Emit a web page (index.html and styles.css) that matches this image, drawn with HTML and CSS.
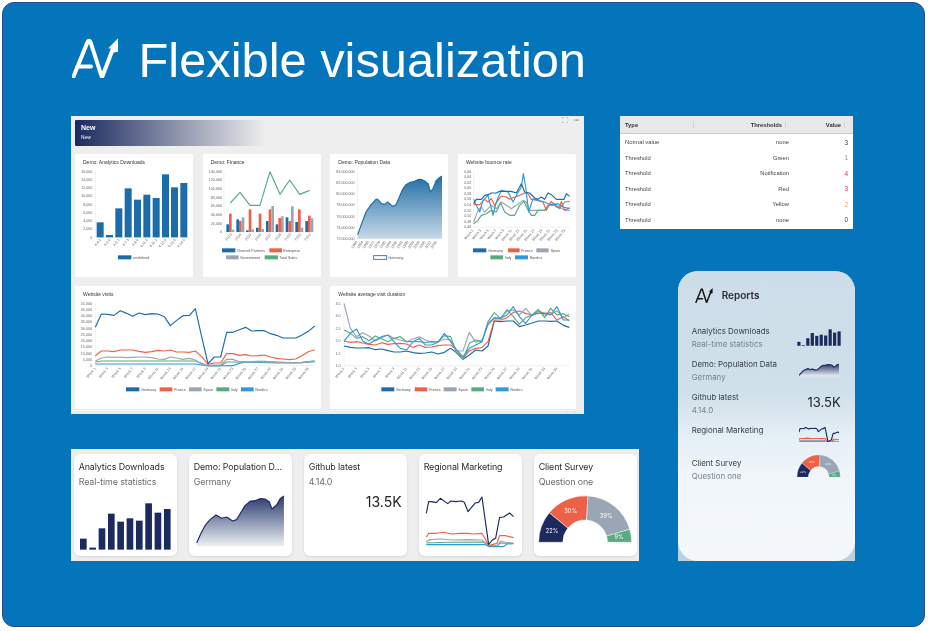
FILE: index.html
```html
<!DOCTYPE html>
<html lang="en">
<head>
<meta charset="utf-8">
<title>Flexible visualization</title>
<link rel="stylesheet" href="styles.css">
</head>
<body>
<svg class="defs" width="0" height="0" aria-hidden="true">
  <defs>
    <symbol id="logo" viewBox="0 0 46 40">
      <path class="logo-line" d="M1.500 38.500L15.500 4Q17 1.500 18.500 4L29.500 38Q30 39 30.500 38L42 8"/>
      <path class="logo-line" d="M5.500 28.500H19"/>
      <path class="logo-head" d="M46 .3L36.300 10.300L41 10.800L39.500 15L46 13.700Z"/>
    </symbol>
    <linearGradient id="popfill" x1="0" y1="0" x2="0" y2="1"><stop offset="0" stop-color="#236ea6"/><stop offset="1" stop-color="#c6d9e7"/></linearGradient>
    <linearGradient id="navyfill" x1="0" y1="0" x2="0" y2="1"><stop offset="0" stop-color="#2a3a6d"/><stop offset="1" stop-color="#eef0f4"/></linearGradient>
  </defs>
</svg>
<main class="slide">
  <header class="hero">
    <svg class="hero-logo"><use href="#logo"/></svg>
    <h1 class="hero-title">Flexible visualization</h1>
  </header>
  <div class="stage">
    <div class="left-col">
      <section class="dash">
        <div class="dash-head">
          <div class="banner"><strong>New</strong><span>New</span></div>
          <div class="dash-tools">
            <svg class="tool" viewBox="0 0 6 6"><path d="M0 1.500V0H1.500M4.500 0H6V1.500M6 4.500V6H4.500M1.500 6H0V4.500"/></svg>
            <svg class="dots" viewBox="0 0 5 2"><circle cx=".7" cy="1" r=".6"/><circle cx="2.500" cy="1" r=".6"/><circle cx="4.300" cy="1" r=".6"/></svg>
          </div>
        </div>
        <div class="dash-grid">
          <article class="card">
            <h2 class="card-title">Demo: Analytics Downloads</h2>
            <svg class="plot" viewBox="15 174 354 320">
              <g class="yl">
                <text x="67" y="182">16,000</text><text x="67" y="207">14,000</text><text x="67" y="232">12,000</text><text x="67" y="256">10,000</text><text x="67" y="281">8,000</text><text x="67" y="306">6,000</text><text x="67" y="331">4,000</text><text x="67" y="355">2,000</text><text x="67" y="380">0</text>
              </g>
              <path class="axis" d="M77 178V376H355"/>
              <g class="de-f">
                <rect x="80" y="331" width="21" height="45"/><rect x="108" y="369" width="21" height="7"/><rect x="136" y="289" width="21" height="87"/><rect x="164" y="229" width="21" height="147"/><rect x="192" y="263" width="21" height="113"/><rect x="220" y="248" width="21" height="128"/><rect x="248" y="258" width="21" height="118"/><rect x="276" y="187" width="21" height="189"/><rect x="303" y="226" width="21" height="150"/><rect x="331" y="213" width="21" height="163"/>
              </g>
              <g class="xl">
                <text transform="rotate(-50 94 384)" x="94" y="384">4.4.1</text><text transform="rotate(-50 122 384)" x="122" y="384">4.5.0</text><text transform="rotate(-50 150 384)" x="150" y="384">4.5.2</text><text transform="rotate(-50 178 384)" x="178" y="384">4.7.3</text><text transform="rotate(-50 206 384)" x="206" y="384">4.8.0</text><text transform="rotate(-50 234 384)" x="234" y="384">4.11.0</text><text transform="rotate(-50 262 384)" x="262" y="384">4.11.1</text><text transform="rotate(-50 290 384)" x="290" y="384">4.12.0</text><text transform="rotate(-50 318 384)" x="318" y="384">4.13.0</text><text transform="rotate(-50 346 384)" x="346" y="384">4.14.0</text>
              </g>
              <rect class="de-f" x="144" y="430" width="40" height="12"/><text class="lg" x="190" y="440">undefined</text>
            </svg>
          </article>
          <article class="card">
            <h2 class="card-title">Demo: Finance</h2>
            <svg class="plot" viewBox="399 174 354 320">
              <g class="yl">
                <text x="456" y="182">140,000</text><text x="456" y="208">120,000</text><text x="456" y="234">100,000</text><text x="456" y="260">80,000</text><text x="456" y="286">60,000</text><text x="456" y="312">40,000</text><text x="456" y="338">20,000</text><text x="456" y="364">0</text>
              </g>
              <path class="axis" d="M462 178V360H735"/>
              <g class="de-f">
                <rect x="469" y="337" width="8" height="23"/><rect x="499" y="322" width="8" height="38"/><rect x="528" y="355" width="8" height="5"/><rect x="558" y="347" width="8" height="13"/><rect x="588" y="327" width="8" height="33"/><rect x="617" y="337" width="8" height="23"/><rect x="647" y="316" width="8" height="44"/><rect x="676" y="330" width="8" height="30"/><rect x="706" y="327" width="8" height="33"/>
              </g>
              <g class="fr-f">
                <rect x="477" y="305" width="8" height="55"/><rect x="507" y="327" width="8" height="33"/><rect x="536" y="292" width="8" height="68"/><rect x="566" y="305" width="8" height="55"/><rect x="596" y="292" width="8" height="68"/><rect x="625" y="318" width="8" height="42"/><rect x="655" y="327" width="8" height="33"/><rect x="684" y="292" width="8" height="68"/><rect x="714" y="311" width="8" height="49"/>
              </g>
              <g class="es-f">
                <rect x="485" y="353" width="8" height="7"/><rect x="515" y="316" width="8" height="44"/><rect x="544" y="352" width="8" height="8"/><rect x="574" y="351" width="8" height="9"/><rect x="604" y="282" width="8" height="78"/><rect x="633" y="313" width="8" height="47"/><rect x="663" y="283" width="8" height="77"/><rect x="692" y="347" width="8" height="13"/><rect x="722" y="319" width="8" height="41"/>
              </g>
              <polyline class="l it" points="481,273 510,241 540,280 570,280 600,179 630,247 659,204 689,247 719,235"/>
              <g class="xl">
                <text transform="rotate(-50 486 368)" x="486" y="368">2013</text><text transform="rotate(-50 515 368)" x="515" y="368">2014</text><text transform="rotate(-50 545 368)" x="545" y="368">2015</text><text transform="rotate(-50 575 368)" x="575" y="368">2016</text><text transform="rotate(-50 605 368)" x="605" y="368">2017</text><text transform="rotate(-50 635 368)" x="635" y="368">2018</text><text transform="rotate(-50 664 368)" x="664" y="368">2019</text><text transform="rotate(-50 694 368)" x="694" y="368">2020</text><text transform="rotate(-50 724 368)" x="724" y="368">2021</text>
              </g>
              <rect class="de-f" x="456" y="409" width="40" height="12"/><text class="lg" x="500" y="419">Channel Partners</text>
              <rect class="fr-f" x="598" y="409" width="38" height="12"/><text class="lg" x="640" y="419">Enterprise</text>
              <rect class="es-f" x="468" y="430" width="38" height="12"/><text class="lg" x="510" y="440">Government</text>
              <rect class="it-f" x="584" y="430" width="40" height="12"/><text class="lg" x="628" y="440">Total Sales</text>
            </svg>
          </article>
          <article class="card">
            <h2 class="card-title">Demo: Population Data</h2>
            <svg class="plot" viewBox="17 174 354 320">
              <g class="yl">
                <text x="91" y="182">84.000.000</text><text x="91" y="215">82.000.000</text><text x="91" y="249">80.000.000</text><text x="91" y="283">78.000.000</text><text x="91" y="317">76.000.000</text><text x="91" y="350">74.000.000</text><text x="91" y="383">72.000.000</text>
              </g>
              <path class="axis" d="M100 178V380H354"/>
              <path fill="url(#popfill)" d="M100 380V368L110 340L125 300L140 278L155 262L160 262L172 275L182 277L190 270L205 283L215 278L225 255L235 232L245 218L255 212L268 209L280 203L290 202L300 206L312 216L318 240L326 230L335 207L345 197L353 192V380Z"/>
              <polyline class="l de" points="100,368 110,340 125,300 140,278 155,262 160,262 172,275 182,277 190,270 205,283 215,278 225,255 235,232 245,218 255,212 268,209 280,203 290,202 300,206 312,216 318,240 326,230 335,207 345,197 353,192"/>
              <g class="xl">
                <text transform="rotate(-55 100 390)" x="100" y="390">1960</text><text transform="rotate(-55 117 390)" x="117" y="390">1964</text><text transform="rotate(-55 134 390)" x="134" y="390">1968</text><text transform="rotate(-55 151 390)" x="151" y="390">1972</text><text transform="rotate(-55 168 390)" x="168" y="390">1976</text><text transform="rotate(-55 185 390)" x="185" y="390">1980</text><text transform="rotate(-55 202 390)" x="202" y="390">1984</text><text transform="rotate(-55 219 390)" x="219" y="390">1988</text><text transform="rotate(-55 236 390)" x="236" y="390">1992</text><text transform="rotate(-55 253 390)" x="253" y="390">1996</text><text transform="rotate(-55 270 390)" x="270" y="390">2000</text><text transform="rotate(-55 287 390)" x="287" y="390">2004</text><text transform="rotate(-55 304 390)" x="304" y="390">2008</text><text transform="rotate(-55 321 390)" x="321" y="390">2012</text><text transform="rotate(-55 338 390)" x="338" y="390">2016</text>
              </g>
              <rect class="swatch-line" x="148" y="431" width="39" height="11"/><text class="lg" x="192" y="440">Germany</text>
            </svg>
          </article>
          <article class="card">
            <h2 class="card-title">Website bounce rate</h2>
            <svg class="plot" viewBox="400 174 354 320">
              <g class="yl">
                <text x="440" y="182">0,66</text><text x="440" y="199">0,64</text><text x="440" y="215">0,62</text><text x="440" y="232">0,60</text><text x="440" y="248">0,58</text><text x="440" y="265">0,56</text><text x="440" y="282">0,54</text><text x="440" y="299">0,52</text><text x="440" y="315">0,50</text><text x="440" y="332">0,48</text><text x="440" y="348">0,46</text>
              </g>
              <path class="axis" d="M447 178V346H736"/>
              <polyline class="l es" points="447,330 460,295 470,285 480,300 490,290 500,280 515,290 530,270 545,280 560,290 575,280 595,265 605,270 615,295 630,295 660,295 670,280 690,275 710,290 725,295 735,295"/>
              <polyline class="l it" points="447,335 460,325 470,310 485,305 500,295 515,300 528,272 540,300 555,310 570,310 585,280 598,268 608,290 620,310 630,310 640,295 660,295 675,275 690,280 705,290 720,270 735,268"/>
              <polyline class="l fr" points="447,278 465,278 480,262 490,270 500,260 510,280 520,265 530,252 545,255 555,262 570,255 585,250 600,243 610,245 620,262 640,265 655,270 665,295 680,268 695,285 705,285 710,268 720,295 735,287"/>
              <polyline class="l no" points="447,262 455,280 465,300 475,265 490,250 505,310 515,270 530,235 550,240 565,270 578,245 590,225 596,185 603,225 612,300 625,260 640,265 660,270 680,280 700,275 715,285 735,290"/>
              <polyline class="l de" points="447,275 455,262 470,262 480,250 490,248 500,243 515,243 525,238 560,238 575,243 590,215 600,240 615,243 630,258 640,262 650,255 660,262 670,243 680,248 695,262 718,262 725,245 735,253"/>
              <g class="xl">
                <text transform="rotate(-50 447 355)" x="447" y="355">Week 1</text><text transform="rotate(-50 470 355)" x="470" y="355">Week 3</text><text transform="rotate(-50 493 355)" x="493" y="355">Week 5</text><text transform="rotate(-50 516 355)" x="516" y="355">Week 7</text><text transform="rotate(-50 539 355)" x="539" y="355">Week 9</text><text transform="rotate(-50 562 355)" x="562" y="355">Week 11</text><text transform="rotate(-50 585 355)" x="585" y="355">Week 13</text><text transform="rotate(-50 608 355)" x="608" y="355">Week 15</text><text transform="rotate(-50 631 355)" x="631" y="355">Week 17</text><text transform="rotate(-50 654 355)" x="654" y="355">Week 19</text><text transform="rotate(-50 677 355)" x="677" y="355">Week 21</text><text transform="rotate(-50 700 355)" x="700" y="355">Week 23</text><text transform="rotate(-50 723 355)" x="723" y="355">Week 25</text>
              </g>
              <rect class="de-f" x="445" y="409" width="40" height="12"/><text class="lg" x="490" y="419">Germany</text>
              <rect class="fr-f" x="550" y="409" width="35" height="12"/><text class="lg" x="590" y="419">France</text>
              <rect class="es-f" x="635" y="409" width="37" height="12"/><text class="lg" x="678" y="419">Spain</text>
              <rect class="it-f" x="497" y="430" width="38" height="12"/><text class="lg" x="540" y="440">Italy</text>
              <rect class="no-f" x="571" y="430" width="39" height="12"/><text class="lg" x="615" y="440">Nordics</text>
            </svg>
          </article>
          <article class="card card-wide">
            <h2 class="card-title">Website visits</h2>
            <svg class="plot plot-wide" viewBox="15 61 737 320">
              <g class="yl">
                <text x="66" y="69">50,000</text><text x="66" y="88">45,000</text><text x="66" y="107">40,000</text><text x="66" y="125">35,000</text><text x="66" y="144">30,000</text><text x="66" y="163">25,000</text><text x="66" y="181">20,000</text><text x="66" y="200">15,000</text><text x="66" y="219">10,000</text><text x="66" y="238">5,000</text><text x="66" y="256">0</text>
              </g>
              <path class="axis" d="M76 65V252H736"/>
              <polyline class="l no" points="76,247 376,247 395,250 414,253 489,252 508,245 527,241 620,244 696,243 734,240"/>
              <polyline class="l it" points="76,241 94,238 376,238 395,245 414,252 452,252 470,241 508,241 545,240 583,239 620,241 658,243 696,242 734,238"/>
              <polyline class="l es" points="76,238 94,229 113,226 132,227 151,226 170,228 188,227 207,226 226,226 245,228 264,232 283,233 301,226 320,229 339,233 358,230 376,235 395,248 414,251 433,250 452,250 470,233 489,233 508,240 527,240 545,240 564,239 583,240 602,240 620,242 639,243 658,243 677,244 696,243 715,240 734,238"/>
              <polyline class="l fr" points="76,222 94,208 113,208 132,210 151,205 170,205 188,205 207,209 226,212 245,210 264,206 283,208 301,205 320,211 339,211 358,212 376,208 395,225 414,248 433,244 452,244 470,216 489,216 508,221 527,219 545,223 564,222 583,220 602,226 620,230 639,232 658,234 677,232 696,222 715,210 734,204"/>
              <polyline class="l de" points="76,137 94,97 113,98 132,101 151,87 170,95 188,104 207,94 226,99 245,96 264,97 283,105 301,132 320,116 339,102 358,101 376,81 395,165 414,246 433,226 452,226 470,152 489,152 508,144 527,137 545,148 564,147 583,147 602,156 620,161 639,169 658,169 677,169 696,160 715,149 734,133"/>
              <g class="xl">
                <text transform="rotate(-50 78 261)" x="78" y="261">Week 1</text><text transform="rotate(-50 115 261)" x="115" y="261">Week 3</text><text transform="rotate(-50 153 261)" x="153" y="261">Week 5</text><text transform="rotate(-50 190 261)" x="190" y="261">Week 7</text><text transform="rotate(-50 228 261)" x="228" y="261">Week 9</text><text transform="rotate(-50 266 261)" x="266" y="261">Week 11</text><text transform="rotate(-50 303 261)" x="303" y="261">Week 13</text><text transform="rotate(-50 341 261)" x="341" y="261">Week 15</text><text transform="rotate(-50 378 261)" x="378" y="261">Week 17</text><text transform="rotate(-50 416 261)" x="416" y="261">Week 19</text><text transform="rotate(-50 454 261)" x="454" y="261">Week 21</text><text transform="rotate(-50 491 261)" x="491" y="261">Week 23</text><text transform="rotate(-50 529 261)" x="529" y="261">Week 25</text><text transform="rotate(-50 566 261)" x="566" y="261">Week 27</text><text transform="rotate(-50 604 261)" x="604" y="261">Week 29</text><text transform="rotate(-50 641 261)" x="641" y="261">Week 31</text><text transform="rotate(-50 679 261)" x="679" y="261">Week 33</text><text transform="rotate(-50 717 261)" x="717" y="261">Week 35</text>
              </g>
              <rect class="de-f" x="168" y="317" width="40" height="12"/><text class="lg" x="213" y="327">Germany</text>
              <rect class="fr-f" x="269" y="317" width="38" height="12"/><text class="lg" x="313" y="327">France</text>
              <rect class="es-f" x="357" y="317" width="38" height="12"/><text class="lg" x="400" y="327">Spain</text>
              <rect class="it-f" x="439" y="317" width="39" height="12"/><text class="lg" x="483" y="327">Italy</text>
              <rect class="no-f" x="513" y="317" width="38" height="12"/><text class="lg" x="556" y="327">Nordics</text>
            </svg>
          </article>
          <article class="card card-wide">
            <h2 class="card-title">Website average visit duration</h2>
            <svg class="plot plot-wide" viewBox="17 61 737 320">
              <g class="yl">
                <text x="49" y="69">3.5</text><text x="49" y="107">3.0</text><text x="49" y="144">2.5</text><text x="49" y="182">2.0</text><text x="49" y="219">1.5</text><text x="49" y="256">1.0</text>
              </g>
              <path class="axis" d="M59 65V252H736"/>
              <polyline class="l de" points="59,193 78,197 97,199 115,199 134,198 153,204 172,202 191,207 209,211 228,211 247,208 266,213 285,215 303,214 322,211 341,217 360,212 379,200 397,213 416,233 435,220 454,205 473,208 491,193 510,118 529,120 548,118 567,118 585,135 604,130 623,124 642,118 661,118 679,119 698,118 717,131 735,137"/>
              <polyline class="l fr" points="59,178 78,182 97,180 115,184 134,188 153,190 172,183 191,188 209,186 228,185 247,187 266,197 285,190 303,197 322,196 341,192 360,190 379,190 397,205 416,232 435,207 454,200 473,198 491,180 510,115 529,115 548,108 567,92 585,88 604,95 623,100 642,88 661,95 679,93 698,115 717,105 735,117"/>
              <polyline class="l es" points="59,65 78,140 97,165 115,153 134,163 153,178 172,168 191,160 209,170 228,175 247,180 266,172 285,165 303,175 322,182 341,180 360,172 379,175 397,208 416,208 435,152 454,182 473,175 491,130 510,110 529,110 548,88 567,85 585,100 604,80 623,102 642,90 661,100 679,98 698,88 717,108 735,97"/>
              <polyline class="l it" points="59,145 78,155 97,170 115,165 134,177 153,163 172,172 191,180 209,170 228,165 247,180 266,180 285,180 303,183 322,180 341,180 360,162 379,165 397,215 416,232 435,185 454,175 473,180 491,120 510,93 529,110 548,84 567,105 585,128 604,108 623,100 642,83 661,108 679,80 698,100 717,96 735,105"/>
              <polyline class="l no" points="59,178 78,155 97,142 115,178 134,187 153,175 172,165 191,160 209,180 228,200 247,205 266,180 285,170 303,190 322,190 341,182 360,155 379,180 397,205 416,225 435,200 454,190 473,180 491,125 510,108 529,110 548,100 567,75 585,105 604,125 623,100 642,95 661,95 679,100 698,75 717,115 735,115"/>
              <g class="xl">
                <text transform="rotate(-50 61 261)" x="61" y="261">Week 1</text><text transform="rotate(-50 99 261)" x="99" y="261">Week 3</text><text transform="rotate(-50 136 261)" x="136" y="261">Week 5</text><text transform="rotate(-50 174 261)" x="174" y="261">Week 7</text><text transform="rotate(-50 211 261)" x="211" y="261">Week 9</text><text transform="rotate(-50 249 261)" x="249" y="261">Week 11</text><text transform="rotate(-50 287 261)" x="287" y="261">Week 13</text><text transform="rotate(-50 324 261)" x="324" y="261">Week 15</text><text transform="rotate(-50 362 261)" x="362" y="261">Week 17</text><text transform="rotate(-50 399 261)" x="399" y="261">Week 19</text><text transform="rotate(-50 437 261)" x="437" y="261">Week 21</text><text transform="rotate(-50 475 261)" x="475" y="261">Week 23</text><text transform="rotate(-50 512 261)" x="512" y="261">Week 25</text><text transform="rotate(-50 550 261)" x="550" y="261">Week 27</text><text transform="rotate(-50 587 261)" x="587" y="261">Week 29</text><text transform="rotate(-50 625 261)" x="625" y="261">Week 31</text><text transform="rotate(-50 663 261)" x="663" y="261">Week 33</text><text transform="rotate(-50 700 261)" x="700" y="261">Week 35</text>
              </g>
              <rect class="de-f" x="171" y="317" width="39" height="12"/><text class="lg" x="214" y="327">Germany</text>
              <rect class="fr-f" x="271" y="317" width="38" height="12"/><text class="lg" x="315" y="327">France</text>
              <rect class="es-f" x="358" y="317" width="39" height="12"/><text class="lg" x="402" y="327">Spain</text>
              <rect class="it-f" x="441" y="317" width="38" height="12"/><text class="lg" x="485" y="327">Italy</text>
              <rect class="no-f" x="514" y="317" width="39" height="12"/><text class="lg" x="558" y="327">Nordics</text>
            </svg>
          </article>
        </div>
        <div class="pager"><span>‹</span><span>›</span></div>
      </section>

      <section class="strip">
        <article class="tile">
          <h3 class="tile-title">Analytics Downloads</h3>
          <p class="tile-sub">Real-time statistics</p>
          <svg class="tile-plot" viewBox="12 130 308 202">
            <g id="mini-bars" class="navy-f">
              <rect x="30" y="279" width="20" height="33"/><rect x="58" y="306" width="20" height="6"/><rect x="86" y="248" width="20" height="64"/><rect x="114" y="204" width="20" height="108"/><rect x="142" y="228" width="20" height="84"/><rect x="170" y="218" width="20" height="94"/><rect x="198" y="225" width="20" height="87"/><rect x="226" y="173" width="20" height="139"/><rect x="254" y="201" width="20" height="111"/><rect x="282" y="190" width="20" height="122"/>
            </g>
          </svg>
        </article>
        <article class="tile">
          <h3 class="tile-title">Demo: Population D...</h3>
          <p class="tile-sub">Germany</p>
          <svg class="tile-plot" viewBox="357 130 308 202">
            <g id="mini-area">
              <path fill="url(#navyfill)" d="M380 302V292L392 265L405 240L420 222L438 208L455 218L470 214L488 226L500 222L510 205L525 180L540 167L555 165L570 159L585 160L598 168L606 190L620 178L630 160L642 151V302Z"/>
              <polyline class="l navy" points="380,292 392,265 405,240 420,222 438,208 455,218 470,214 488,226 500,222 510,205 525,180 540,167 555,165 570,159 585,160 598,168 606,190 620,178 630,160 642,151"/>
            </g>
          </svg>
        </article>
        <article class="tile">
          <h3 class="tile-title">Github latest</h3>
          <p class="tile-sub">4.14.0</p>
          <div class="tile-stat">13.5K</div>
        </article>
        <article class="tile">
          <h3 class="tile-title">Regional Marketing</h3>
          <svg class="tile-plot tile-plot-tall" viewBox="176 100 308 232">
            <g id="mini-lines">
              <polyline class="l no" points="198,297 375,297 385,303 430,303 440,295 460,294"/>
              <polyline class="l it" points="198,292 260,290 370,289 385,301 412,300 420,292 460,293"/>
              <polyline class="l es" points="198,288 210,282 240,280 280,283 320,282 365,283 385,300 412,298 420,286 435,290 460,293"/>
              <polyline class="l fr" points="198,275 205,263 228,263 250,260 275,265 300,263 320,263 340,265 365,263 375,280 385,300 410,293 418,270 435,270 460,276"/>
              <polyline class="l navy" points="198,203 205,168 215,168 228,171 240,158 262,174 272,166 285,168 303,166 312,170 323,198 345,172 355,170 365,154 385,296 398,282 406,278 418,215 430,214 448,202 460,213"/>
            </g>
          </svg>
        </article>
        <article class="tile">
          <h3 class="tile-title">Client Survey</h3>
          <p class="tile-sub">Question one</p>
          <svg class="tile-plot" viewBox="520 130 308 202">
            <g id="mini-gauge">
              <path class="navy-f seg" d="M534 290A139.500 139.500 0 0 1 566 201.100L621.900 247.300A67 67 0 0 0 606.500 290Z"/>
              <path class="fr-f seg" d="M566 201.100A139.500 139.500 0 0 1 682.300 150.800L677.700 223.100A67 67 0 0 0 621.900 247.300Z"/>
              <path class="es-f seg" d="M682.300 150.800A139.500 139.500 0 0 1 807.500 251.100L737.800 271.300A67 67 0 0 0 677.700 223.100Z"/>
              <path class="it-f seg" d="M807.500 251.100A139.500 139.500 0 0 1 813 290H740.500A67 67 0 0 0 737.800 271.300Z"/>
              <g class="gauge-text">
                <text x="574" y="261">22%</text><text x="630" y="202">30%</text><text x="737" y="216">39%</text><text x="775" y="281">9%</text>
              </g>
            </g>
          </svg>
        </article>
      </section>
    </div>

    <div class="right-col">
      <section class="table">
        <div class="t-row t-head">
          <span class="t-cell t-sort">Type<i class="sort"></i></span>
          <span class="t-cell t-right t-sort">Thresholds<i class="sort"></i></span>
          <span class="t-cell t-right t-sort">Value<i class="sort"></i></span>
        </div>
        <div class="t-row"><span class="t-cell">Normal value</span><span class="t-cell t-right">none</span><span class="t-cell t-right">3</span></div>
        <div class="t-row"><span class="t-cell">Threshold</span><span class="t-cell t-right">Green</span><span class="t-cell t-right v-green">1</span></div>
        <div class="t-row"><span class="t-cell">Threshold</span><span class="t-cell t-right">Notification</span><span class="t-cell t-right v-red">4</span></div>
        <div class="t-row"><span class="t-cell">Threshold</span><span class="t-cell t-right">Red</span><span class="t-cell t-right v-red">3</span></div>
        <div class="t-row"><span class="t-cell">Threshold</span><span class="t-cell t-right">Yellow</span><span class="t-cell t-right v-orange">2</span></div>
        <div class="t-row"><span class="t-cell">Threshold</span><span class="t-cell t-right">none</span><span class="t-cell t-right">0</span></div>
      </section>

      <section class="reports">
        <div class="reports-inner">
          <header class="rep-head">
            <svg class="rep-logo"><use href="#logo"/></svg>
            <h2 class="rep-title">Reports</h2>
          </header>
          <div class="rep-row">
            <div class="rep-text"><h3>Analytics Downloads</h3><p>Real-time statistics</p></div>
            <svg class="rep-chart rep-bars" viewBox="28 170 276 144" preserveAspectRatio="none"><use href="#mini-bars"/></svg>
          </div>
          <div class="rep-row">
            <div class="rep-text"><h3>Demo: Population Data</h3><p>Germany</p></div>
            <svg class="rep-chart rep-area" viewBox="380 151 262 151" preserveAspectRatio="none"><use href="#mini-area"/></svg>
          </div>
          <div class="rep-row">
            <div class="rep-text"><h3>Github latest</h3><p>4.14.0</p></div>
            <div class="rep-stat">13.5K</div>
          </div>
          <div class="rep-row">
            <div class="rep-text"><h3>Regional Marketing</h3></div>
            <svg class="rep-chart rep-lines" viewBox="198 154 262 149" preserveAspectRatio="none"><use href="#mini-lines"/></svg>
          </div>
          <div class="rep-row">
            <div class="rep-text"><h3>Client Survey</h3><p>Question one</p></div>
            <svg class="rep-chart rep-gauge" viewBox="534 151 279 139" preserveAspectRatio="none"><use href="#mini-gauge"/></svg>
          </div>
        </div>
      </section>
    </div>
  </div>
</main>
</body>
</html>
```

FILE: styles.css
```css
* { box-sizing: border-box; }
html, body { margin: 0; background: #fff; }
h1, h2, h3, p { margin: 0; font-weight: normal; }
.defs { position: absolute; }

.slide {
  width: 923px; height: 625px; margin: 2px 0 0 2px;
  background: #0475bb; border: 1px solid #2b4a8c; border-radius: 12px;
  padding: 35px 0 0 68px; overflow: hidden;
  font-family: "Liberation Sans", Arial, sans-serif;
}
.hero { display: flex; align-items: flex-start; height: 40px; margin-bottom: 38px; }
.hero-logo { width: 46px; height: 40px; margin-left: 1px; color: #fff; flex: none; }
.logo-line { fill: none; stroke: currentColor; stroke-width: 4; stroke-linecap: round; stroke-linejoin: round; }
.logo-head { fill: currentColor; }
.hero-title { margin: 1.500px 0 0 20.500px; color: #fff; font-size: 48.800px; line-height: 40px; white-space: nowrap; }

.stage { display: flex; }
.left-col { width: 549px; }
.right-col { display: flex; flex-direction: column; }

.dash { position: relative; width: 513px; height: 298px; background: #eee; padding: 4px 8px 0 4px; filter: blur(.3px); }
.dash-head { display: flex; justify-content: space-between; height: 26.300px; margin-bottom: 7.700px; }
.banner {
  width: 190px; padding: 4px 0 0 6px; color: #fff; display: flex; flex-direction: column; gap: 3px;
  background: linear-gradient(90deg, #1b2a5f 0%, rgba(27, 42, 95, 0) 100%); border-radius: 1px;
}
.banner strong { font-size: 7px; line-height: 8px; }
.banner span { font-size: 4.800px; line-height: 6px; }
.dash-tools { display: flex; gap: 5.600px; margin: -3.500px -3px 0 0; height: 7px; align-items: center; }
.tool { width: 6px; height: 6px; fill: none; stroke: #777; stroke-width: .5; }
.dots { width: 5px; height: 2px; fill: #444; }
.dash-grid { display: grid; grid-template-columns: repeat(4, 118px); gap: 9.650px 9.650px; }
.card { background: #fff; height: 122.700px; border-radius: 1px; }
.card-wide { grid-column: span 2; }
.card-title { height: 16px; padding: 4px 0 0 8px; font-size: 5px; line-height: 8px; color: #333; white-space: nowrap; }
.plot { display: block; width: 118px; height: 106.700px; }
.plot-wide { width: 245.670px; }
.yl text { font-size: 11px; fill: #666; text-anchor: end; }
.xl text { font-size: 11px; fill: #666; text-anchor: end; }
.lg { font-size: 11px; fill: #555; }
.axis { fill: none; stroke: #e2e2e2; stroke-width: 1.500; }
.l { fill: none; stroke-width: 1.150px; stroke-linejoin: round; vector-effect: non-scaling-stroke; }
.de { stroke: #1b6ca8; }
.fr { stroke: #ee6149; }
.es { stroke: #9aa5b5; }
.it { stroke: #58ab80; }
.no { stroke: #319ad8; }
.navy { stroke: #1b2a5f; }
.de-f { fill: #1b6ca8; }
.fr-f { fill: #ee6149; }
.es-f { fill: #9aa5b5; }
.it-f { fill: #58ab80; }
.no-f { fill: #319ad8; }
.navy-f { fill: #1b2a5f; }
.swatch-line { fill: #fff; stroke: #1b6ca8; stroke-width: 2.500; }
.pager { position: absolute; right: 8px; bottom: 0; display: flex; gap: 6px; font-size: 6px; line-height: 6px; color: #d5d5d5; }

.strip {
  width: 568px; height: 112px; margin-top: 35px; padding: 5px 3px 5px 3px; background: #eee;
  display: grid; grid-template-columns: repeat(5, 102.600px); column-gap: 12.400px; filter: blur(.2px);
}
.tile { background: #fff; border-radius: 6px; height: 102px; box-shadow: 0 1px 3px rgba(0, 0, 0, .1); display: flex; flex-direction: column; overflow: hidden; font-family: Inter, sans-serif; }
.tile-title { padding: 6.500px 4.700px 0; font-size: 8.900px; letter-spacing: -.1px; line-height: 12px; color: #2b2b2b; white-space: nowrap; }
.tile-sub { padding: 3px 4.700px 0; font-size: 8.900px; letter-spacing: -.1px; line-height: 12px; color: #6c6c6c; }
.tile-plot { display: block; margin-top: auto; width: 102.600px; height: 67.300px; }
.tile-plot-tall { height: 77.300px; }
.seg { stroke: #fff; stroke-width: 1.500; }
.gauge-text text { font-size: 17px; fill: #fff; text-anchor: middle; font-family: Inter, sans-serif; }
.tile-stat { margin: 6px 5px 0 0; text-align: right; font-size: 14px; line-height: 16px; color: #222; }

.table { width: 232.700px; height: 113px; background: #fff; font-size: 5.800px; color: #444; filter: blur(.3px); }
.t-row { display: grid; grid-template-columns: 72px 92px 59px; height: 15.500px; padding: 0 4.500px 0 5px; align-items: center; }
.t-head { height: 18.300px; background: #e8e8e8; border-bottom: 1px solid #c9c9c9; font-weight: bold; color: #333; }
.t-cell { white-space: nowrap; }
.t-right { text-align: right; }
.t-sort { position: relative; }
.t-right.t-sort { padding-right: 7px; }
.sort { position: absolute; right: 3px; top: 50%; width: 1.500px; height: 6px; margin-top: -3px; background: #d2d2d2; border-radius: 1px; }
.t-row .t-cell:last-child { font-size: 6.500px; }
.t-head .t-cell:last-child { font-size: 5.800px; }
.v-green { color: #6fae69; }
.v-red { color: #e3304a; }
.v-orange { color: #f9a33a; }

.reports { align-self: flex-start; width: 176.700px; height: 290px; margin: 42px 0 0 58px; background: #b9d2e2; border-radius: 20px 20px 0 0; font-family: Inter, sans-serif; filter: blur(.3px); }
.reports-inner {
  height: 100%; padding: 17px 14px 0 13.700px; border-radius: 20px;
  background: linear-gradient(180deg, #cddde9 0%, #d0e0ea 42%, #e6f0f6 58%, #f1f6fa 72%, #f4f8fb 100%);
}
.rep-head { display: flex; align-items: center; height: 14px; margin-bottom: 23px; padding-left: 3px; }
.rep-logo { width: 18px; height: 15px; color: #15161a; flex: none; }
.rep-title { margin-left: 9px; font-size: 10px; font-weight: 600; color: #2a2d33; }
.rep-row { display: flex; justify-content: space-between; align-items: flex-start; height: 33px; }
.rep-text h3 { font-size: 7.900px; line-height: 13px; color: #333b42; white-space: nowrap; }
.rep-text p { font-size: 7.900px; line-height: 13px; color: #75828c; white-space: nowrap; }
.rep-chart { display: block; }
.rep-bars { width: 44px; height: 17px; margin-top: 4px; }
.rep-area { width: 40px; height: 12.300px; margin: 6.300px 2px 0 0; }
.rep-lines { width: 40.700px; height: 15.700px; margin: 2.700px 1.500px 0 0; }
.rep-gauge { width: 43.300px; height: 22.300px; margin-top: -2px; }
.rep-stat { font-size: 13px; color: #222; line-height: 16px; margin-top: 3px; }
```
